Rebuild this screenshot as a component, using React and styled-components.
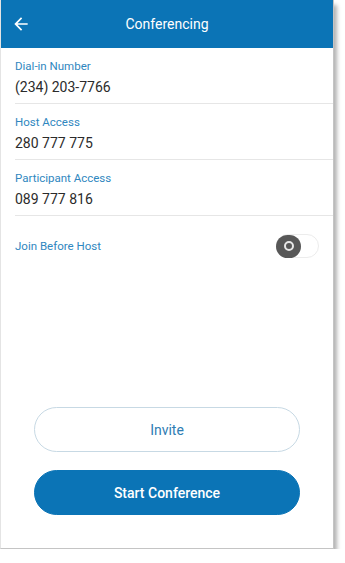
import styled, { createGlobalStyle } from 'styled-components'

const GlobalStyle = createGlobalStyle`
  body {
    margin: 0;
    background: #ffffff;
    font-family: Roboto, "Noto Sans", Arial, sans-serif;
  }
`

const Frame = styled.div`
  width: 332px;
  height: 548px;
  display: flex;
  flex-direction: column;
  background: #ffffff;
  border-left: 1px solid #e4e4e4;
  border-right: 1px solid #c4c4c4;
  border-bottom: 1px solid #c4c4c4;
  box-shadow: 3px 5px 4px rgba(0, 0, 0, 0.3);
  overflow: hidden;
`

const Header = styled.header`
  height: 48px;
  flex-shrink: 0;
  display: flex;
  align-items: center;
  position: relative;
  background: #0b74b6;
  color: #ffffff;
`

const BackButton = styled.button`
  border: none;
  background: none;
  padding: 0 0 0 10px;
  display: flex;
  align-items: center;
  cursor: pointer;
`

const Title = styled.h1`
  position: absolute;
  left: 0;
  right: 0;
  margin: 0;
  text-align: center;
  font-size: 14px;
  font-weight: 400;
  pointer-events: none;
`

const InfoRow = styled.div`
  margin-left: 14px;
  padding: 11px 0 6px;
  border-bottom: 1px solid #e6e6e6;
`

const Label = styled.div`
  font-size: 11.5px;
  line-height: 14px;
  color: #2f87c0;
`

const Value = styled.div`
  margin-top: 4px;
  font-size: 14px;
  line-height: 20px;
  color: #2b2b2b;
`

const ToggleRow = styled.div`
  height: 60px;
  margin-left: 14px;
  padding-right: 14px;
  display: flex;
  align-items: center;
  justify-content: space-between;
`

const Track = styled.div`
  width: 43px;
  height: 24px;
  box-sizing: border-box;
  border: 1px solid #ececec;
  border-radius: 12px;
  display: flex;
  align-items: center;
`

const Thumb = styled.div`
  width: 25px;
  height: 23px;
  border-radius: 12px;
  background: #585858;
  display: flex;
  align-items: center;
  justify-content: center;
  margin-left: -1px;
`

const Ring = styled.div`
  width: 6px;
  height: 6px;
  border-radius: 50%;
  border: 2px solid #e8e8e8;
`

const Spacer = styled.div`
  flex: 1;
`

const Actions = styled.div`
  display: flex;
  flex-direction: column;
  gap: 18px;
  padding: 0 33px 33px 33px;
`

const PillButton = styled.button`
  height: 45px;
  border-radius: 23px;
  font-family: inherit;
  font-size: 14px;
  font-weight: ${p => (p.primary ? 500 : 400)};
  cursor: pointer;
  border: 1px solid ${p => (p.primary ? '#0b74b6' : '#c7d9e4')};
  background: ${p => (p.primary ? '#0b74b6' : '#ffffff')};
  color: ${p => (p.primary ? '#ffffff' : '#2f7db3')};
`

const fields = [
  { label: 'Dial-in Number', value: '(234) 203-7766' },
  { label: 'Host Access', value: '280 777 775' },
  { label: 'Participant Access', value: '089 777 816' },
]

export default function App() {
  return (
    <>
      <GlobalStyle />
      <Frame>
        <Header>
          <BackButton aria-label="Back">
            <svg width="20" height="20" viewBox="0 0 24 24" fill="#ffffff">
              <path d="M20 11H7.83l5.59-5.59L12 4l-8 8 8 8 1.41-1.41L7.83 13H20v-2z" />
            </svg>
          </BackButton>
          <Title>Conferencing</Title>
        </Header>

        {fields.map(f => (
          <InfoRow key={f.label}>
            <Label>{f.label}</Label>
            <Value>{f.value}</Value>
          </InfoRow>
        ))}

        <ToggleRow>
          <Label>Join Before Host</Label>
          <Track>
            <Thumb>
              <Ring />
            </Thumb>
          </Track>
        </ToggleRow>

        <Spacer />

        <Actions>
          <PillButton>Invite</PillButton>
          <PillButton primary>Start Conference</PillButton>
        </Actions>
      </Frame>
    </>
  )
}
